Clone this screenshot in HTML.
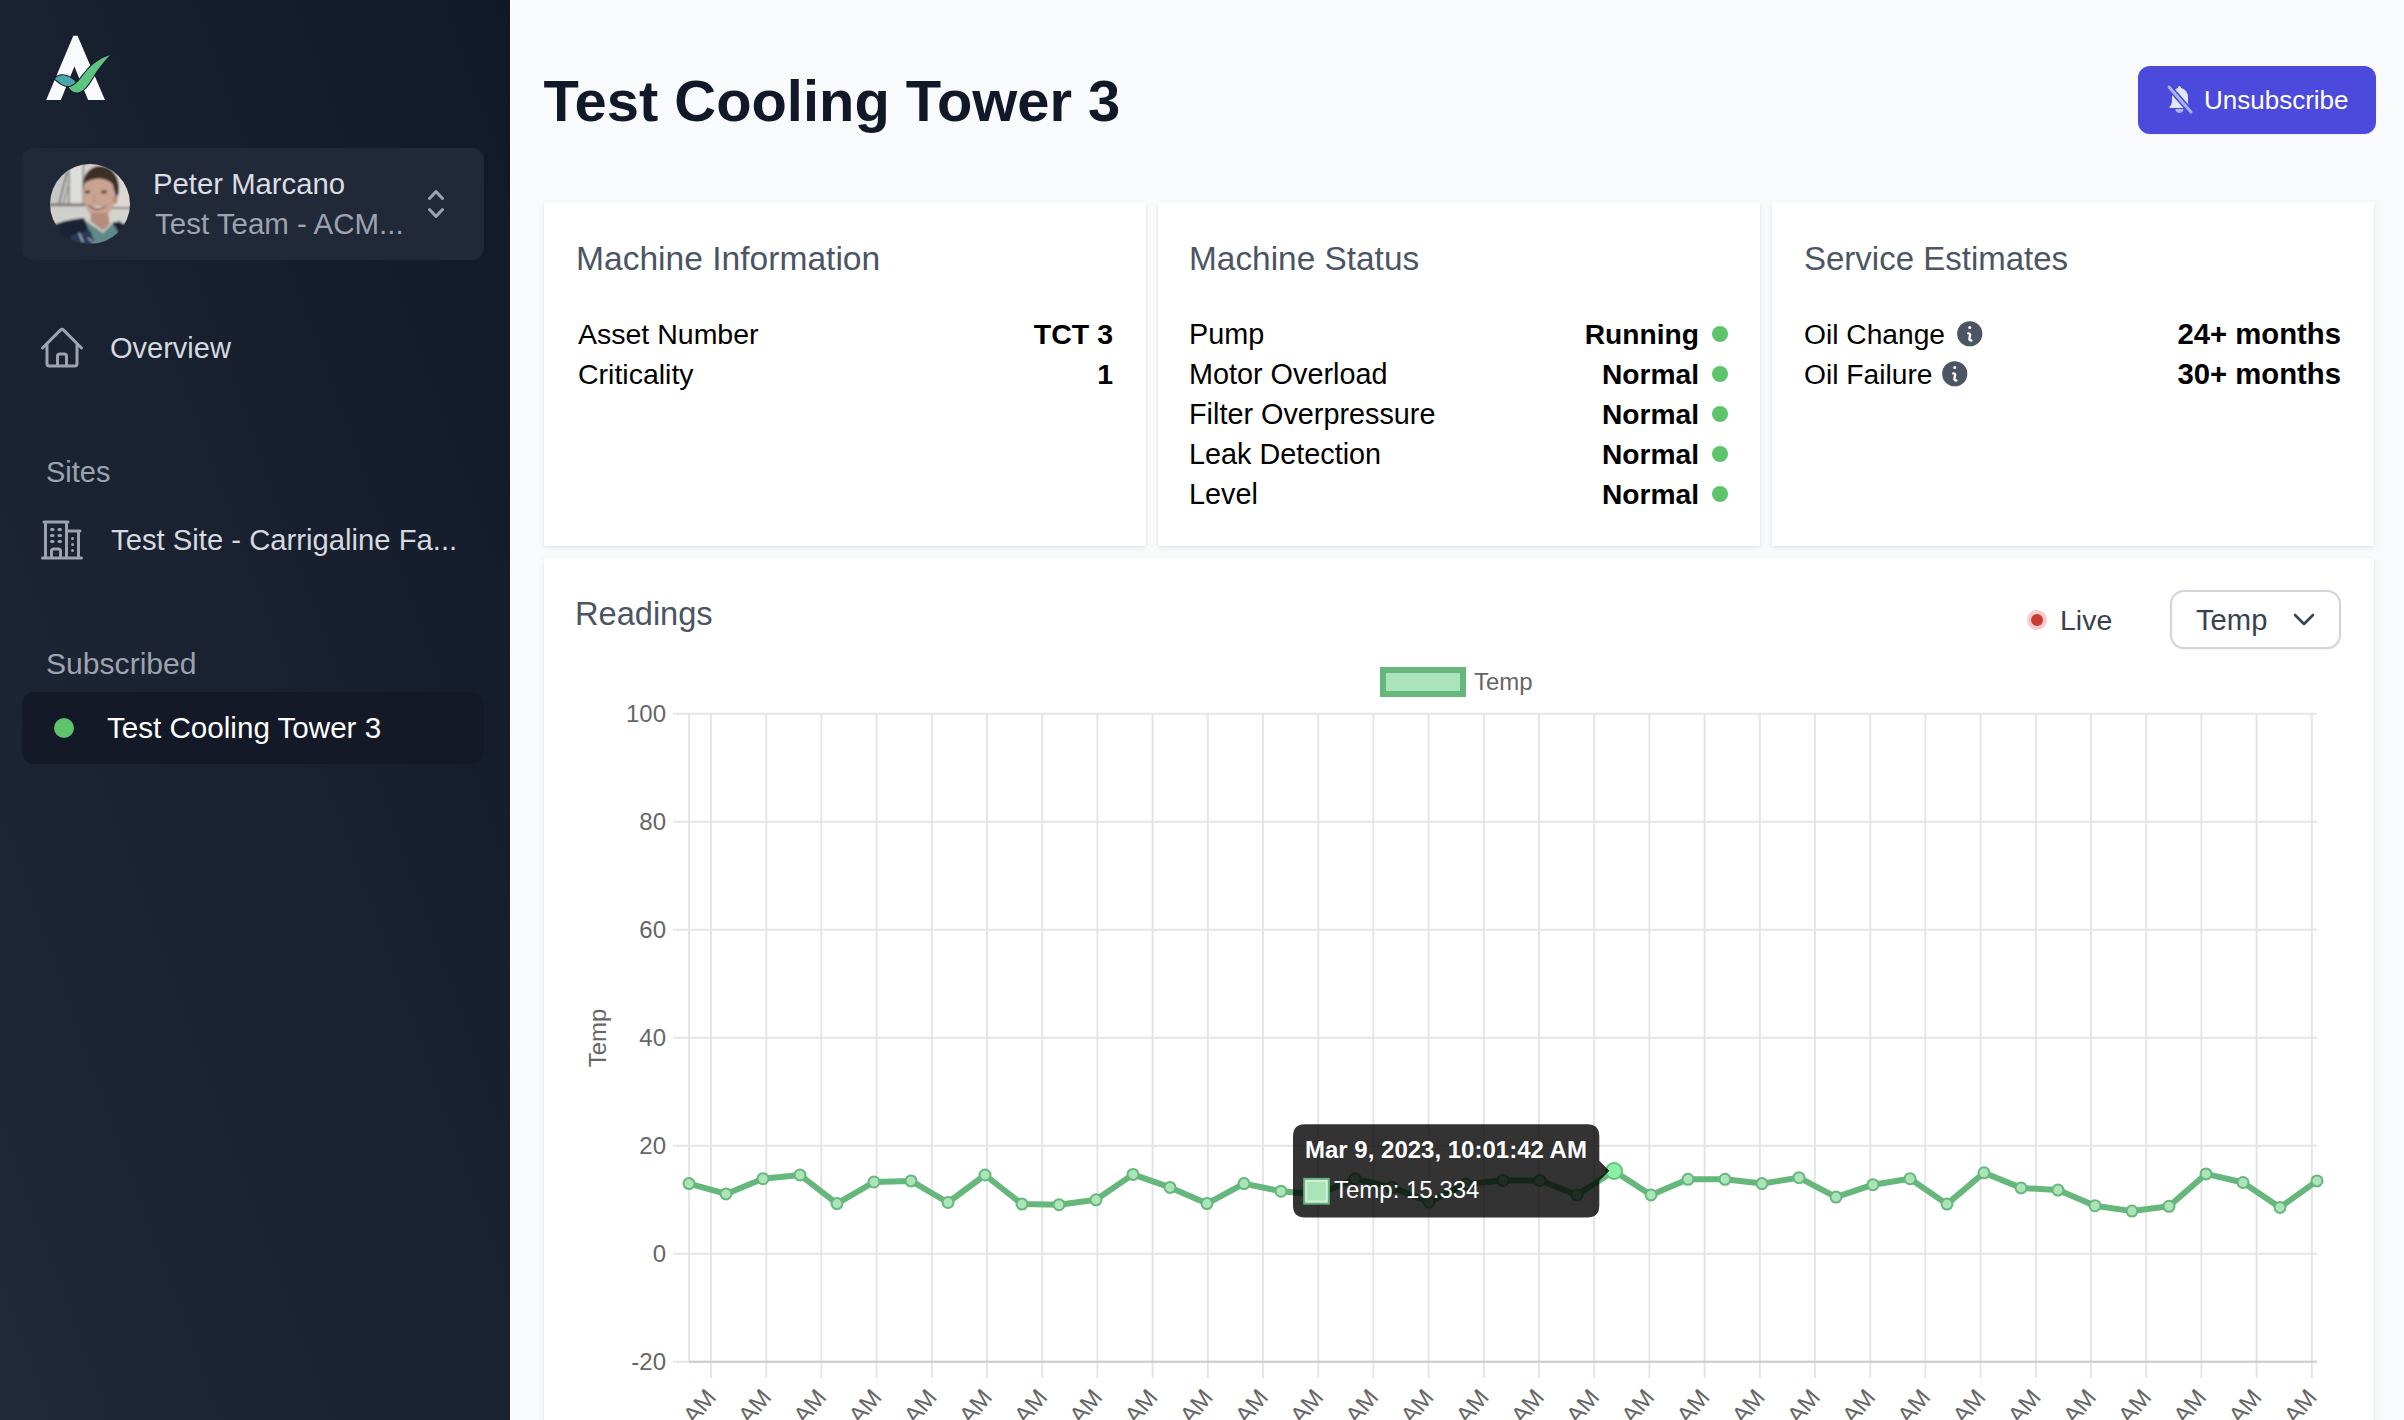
<!DOCTYPE html>
<html><head><meta charset="utf-8">
<style>
html,body{margin:0;padding:0;}
body{width:2404px;height:1420px;overflow:hidden;position:relative;background:#f9fafb;font-family:"Liberation Sans",sans-serif;}
.t{position:absolute;line-height:1;white-space:nowrap;}
@media (max-width:1300px){html{zoom:0.5;}}
.abs{position:absolute;}
.card{position:absolute;background:#fff;box-shadow:0 2px 6px rgba(0,0,0,0.07),0 1px 2px rgba(0,0,0,0.05);}
</style></head><body>
<div class="abs" style="left:0;top:0;width:510px;height:1420px;background:linear-gradient(to bottom left,#111827 0%,#1a2130 50%,#1f2937 100%);"></div>
<div class="abs" style="left:510px;top:0;width:1px;height:1420px;background:#ffffff;"></div>
<svg class="abs" style="left:30px;top:20px" width="100" height="100" viewBox="0 0 1420 1420">
<path fill="#f9fafb" d="M615,225 L675,225 L1065,1135 L825,1135 L630,660 L438,1135 L230,1135 Z"/>
<path fill="#48a5aa" stroke="#171c2a" stroke-width="30" paint-order="stroke" d="M352,838 C410,758 545,765 662,893 C600,952 510,952 440,905 C400,878 378,852 352,838 Z"/>
<path fill="#5cc57f" stroke="#171c2a" stroke-width="30" paint-order="stroke" d="M552,955 C625,945 690,875 770,765 C870,630 990,545 1138,497 C1070,565 1000,650 925,760 C850,880 790,1000 690,1025 C620,1040 574,1000 552,955 Z"/>
</svg>
<div class="abs" style="left:22px;top:148px;width:462px;height:112px;border-radius:12px;background:#212837;"></div>
<svg class="abs" style="left:50px;top:164px" width="80" height="80" viewBox="0 0 80 80">
<defs><clipPath id="av"><circle cx="40" cy="40" r="40"/></clipPath><filter id="avb" x="-5%" y="-5%" width="110%" height="110%"><feGaussianBlur stdDeviation="1"/></filter></defs>
<g clip-path="url(#av)"><g filter="url(#avb)">
<rect x="-2" y="-2" width="84" height="84" fill="#d5d3ce"/>
<rect x="-2" y="-2" width="34" height="42" fill="#c6c7c5"/>
<path d="M9,40 L17,8" stroke="#55575a" stroke-width="1.3" fill="none"/>
<path d="M13,40 L21,12" stroke="#6b6d6e" stroke-width="1" fill="none"/>
<rect x="18" y="-2" width="1.8" height="42" fill="#8f8d88"/>
<rect x="20" y="-2" width="12" height="42" fill="#dcdcd9"/>
<rect x="32" y="-2" width="2.5" height="42" fill="#a9a6a0"/>
<rect x="-2" y="39.5" width="42" height="3" fill="#7d7770"/>
<rect x="-2" y="42.5" width="42" height="40" fill="#d0d0cd"/>
<rect x="62" y="-2" width="20" height="45" fill="#ddd8d2"/>
<rect x="55" y="43" width="27" height="2" fill="#8b857d"/>
<path d="M33,24 C32,9 42,1 52,2 C62,3 70,12 69,28 L66,36 C65,23 60,17 52,15 C44,14 38,17 34,27 Z" fill="#3c2d25"/>
<path d="M34,20 C40,14 56,12 63,21 C65,30 66,38 62,45 C58,51 52,54 47,53 C40,52 35,44 34,36 C33,30 33,25 34,20 Z" fill="#caa393"/>
<ellipse cx="65" cy="36" rx="2.5" ry="4" fill="#b98d7c"/>
<ellipse cx="37.5" cy="28" rx="3" ry="1.4" fill="#5a4038"/>
<ellipse cx="54" cy="28" rx="3.2" ry="1.4" fill="#5a4038"/>
<path d="M45,30 L43.5,38 L47,38.5" stroke="#b08878" stroke-width="0.8" fill="none"/>
<path d="M37.5,40.5 C44,48 51,47 57,41.5 C50,43.5 44,43.5 37.5,40.5 Z" fill="#6a4540"/>
<path d="M39.5,41.3 Q47,44 55,42 Q48,47 39.5,41.3 Z" fill="#f0eae6"/>
<path d="M41,49 L58,49 L60,60 L53,67 L40,57 Z" fill="#b58d7d"/>
<path d="M33,55 L46,64 L53,69 L61,61 L70,56 L76,82 L34,82 Z" fill="#5e8a89"/>
<path d="M-2,63 C10,58 20,55 34,54 C37,62 41,72 45,82 L-2,82 Z" fill="#1d2434"/>
<path d="M20,72 L40,66 L46,82 L24,82 Z" fill="#2b3a58"/>
<path d="M62,59 C66,57 72,58 78,62 L82,82 L70,82 C70,72 68,65 62,59 Z" fill="#1d2434"/>
<path d="M29,69 L33,78" stroke="#e5e7eb" stroke-width="1"/>
<path d="M38,74 L45,80" stroke="#e5e7eb" stroke-width="1"/>
</g></g></svg>
<div class="t" style="left:153.0px;top:168.9px;font-size:29.3px;color:#dadde3;font-weight:400;">Peter Marcano</div>
<div class="t" style="left:155.0px;top:209.0px;font-size:29.5px;color:#9ca3af;font-weight:400;">Test Team - ACM...</div>
<svg class="abs" style="left:416px;top:184px" width="40" height="40" viewBox="0 0 20 20" fill="#9ca3af">
<path fill-rule="evenodd" d="M10 3a.75.75 0 01.55.24l3.25 3.5a.75.75 0 11-1.1 1.02L10 4.852 7.3 7.76a.75.75 0 01-1.1-1.02l3.25-3.5A.75.75 0 0110 3zm-3.76 9.2a.75.75 0 011.06.04l2.7 2.908 2.7-2.908a.75.75 0 111.1 1.02l-3.25 3.5a.75.75 0 01-1.1 0l-3.25-3.5a.75.75 0 01.04-1.06z"/>
</svg>
<svg class="abs" style="left:38px;top:324px" width="48" height="48" viewBox="0 0 24 24" fill="none" stroke="#9ca3af" stroke-width="1.5" stroke-linecap="round" stroke-linejoin="round">
<path d="M2.25 12l8.954-8.955c.44-.439 1.152-.439 1.591 0L21.75 12M4.5 9.75v10.125c0 .621.504 1.125 1.125 1.125H9.75v-4.875c0-.621.504-1.125 1.125-1.125h2.25c.621 0 1.125.504 1.125 1.125V21h4.125c.621 0 1.125-.504 1.125-1.125V9.75M8.25 21h8.25"/>
</svg>
<div class="t" style="left:110.0px;top:333.5px;font-size:29px;color:#d6d9df;font-weight:400;">Overview</div>
<div class="t" style="left:46.0px;top:457.5px;font-size:29px;color:#9ca3af;font-weight:400;">Sites</div>
<svg class="abs" style="left:38px;top:516px" width="48" height="48" viewBox="0 0 24 24" fill="none" stroke="#9ca3af" stroke-width="1.5" stroke-linecap="round" stroke-linejoin="round">
<path d="M2.25 21h19.5m-18-18v18m10.5-18v18m6-13.5V21M6.75 6.75h.75m-.75 3h.75m-.75 3h.75m3-6h.75m-.75 3h.75m-.75 3h.75M6.75 21v-3.375c0-.621.504-1.125 1.125-1.125h2.25c.621 0 1.125.504 1.125 1.125V21M3 3h12m-.75 4.5H21m-3.75 3.75h.008v.008h-.008v-.008zm0 3h.008v.008h-.008v-.008zm0 3h.008v.008h-.008v-.008z"/>
</svg>
<div class="t" style="left:111.0px;top:525.5px;font-size:29.25px;color:#d6d9df;font-weight:400;">Test Site - Carrigaline Fa...</div>
<div class="t" style="left:46.0px;top:648.5px;font-size:30.1px;color:#9ca3af;font-weight:400;">Subscribed</div>
<div class="abs" style="left:22px;top:692px;width:462px;height:72px;border-radius:12px;background:#131927;"></div>
<div class="abs" style="left:54px;top:718px;width:20px;height:20px;border-radius:50%;background:#5ec46c;"></div>
<div class="t" style="left:107.0px;top:713.1px;font-size:29.6px;color:#ffffff;font-weight:400;">Test Cooling Tower 3</div>
<div class="t" style="left:543.5px;top:73.0px;font-size:57.9px;color:#111827;font-weight:700;">Test Cooling Tower 3</div>
<div class="abs" style="left:2138px;top:66px;width:238px;height:68px;border-radius:12px;background:#4c4adc;box-shadow:0 1px 2px rgba(0,0,0,0.05);"></div>
<svg class="abs" style="left:2160px;top:80px" width="40" height="40" viewBox="0 0 40 40">
<path d="M18,8 C18,6.5 19,6 19.5,6 C20,6 21,6.5 21,8 C25,9 28,12.5 28,17 L28,22 C28,25 29.5,27 30.5,28 L10,28 C9.5,28 9,27.5 9.5,27 C10.5,26 12,24 12,21 L12,17 C12,12.5 14.5,9 18,8 Z" fill="#e0e7ff"/>
<path d="M15.5,29 C15.5,31.5 17.5,33 19.5,33 C21.5,33 23.5,31.5 23.5,29 Z" fill="#a5b4fc"/>
<path d="M9,7 L31,32" stroke="#4c4adc" stroke-width="6"/>
<path d="M9,7 L31,32" stroke="#a5b4fc" stroke-width="3" stroke-linecap="round"/>
</svg>
<div class="t" style="left:2204.0px;top:87.2px;font-size:26px;color:#ffffff;font-weight:400;">Unsubscribe</div>
<div class="card" style="left:544px;top:202px;width:602px;height:344px;"></div>
<div class="card" style="left:1158px;top:202px;width:602px;height:344px;"></div>
<div class="card" style="left:1772px;top:202px;width:602px;height:344px;"></div>
<div class="card" style="left:544px;top:558px;width:1830px;height:900px;"></div>
<div class="t" style="left:576.0px;top:241.9px;font-size:33.6px;color:#4b5563;font-weight:400;">Machine Information</div>
<div class="t" style="left:578.0px;top:319.8px;font-size:28.5px;color:#000;font-weight:400;">Asset Number</div>
<div class="t" style="left:578.0px;top:359.6px;font-size:28.5px;color:#000;font-weight:400;">Criticality</div>
<div class="t" style="right:1291.0px;top:319.8px;font-size:28.5px;color:#000;font-weight:700;">TCT 3</div>
<div class="t" style="right:1291.0px;top:359.6px;font-size:28.5px;color:#000;font-weight:700;">1</div>
<div class="t" style="left:1189.0px;top:242.0px;font-size:33.4px;color:#4b5563;font-weight:400;">Machine Status</div>
<div class="t" style="left:1189.0px;top:319.5px;font-size:28.8px;color:#000;font-weight:400;">Pump</div>
<div class="t" style="right:705.0px;top:320.0px;font-size:28.2px;color:#000;font-weight:700;">Running</div>
<div class="abs" style="left:1712px;top:325.6px;width:16px;height:16px;border-radius:50%;background:#5ec46c;"></div>
<div class="t" style="left:1189.0px;top:359.5px;font-size:28.8px;color:#000;font-weight:400;">Motor Overload</div>
<div class="t" style="right:705.0px;top:360.0px;font-size:28.2px;color:#000;font-weight:700;">Normal</div>
<div class="abs" style="left:1712px;top:365.6px;width:16px;height:16px;border-radius:50%;background:#5ec46c;"></div>
<div class="t" style="left:1189.0px;top:399.5px;font-size:28.8px;color:#000;font-weight:400;">Filter Overpressure</div>
<div class="t" style="right:705.0px;top:400.0px;font-size:28.2px;color:#000;font-weight:700;">Normal</div>
<div class="abs" style="left:1712px;top:405.6px;width:16px;height:16px;border-radius:50%;background:#5ec46c;"></div>
<div class="t" style="left:1189.0px;top:439.5px;font-size:28.8px;color:#000;font-weight:400;">Leak Detection</div>
<div class="t" style="right:705.0px;top:440.0px;font-size:28.2px;color:#000;font-weight:700;">Normal</div>
<div class="abs" style="left:1712px;top:445.6px;width:16px;height:16px;border-radius:50%;background:#5ec46c;"></div>
<div class="t" style="left:1189.0px;top:479.5px;font-size:28.8px;color:#000;font-weight:400;">Level</div>
<div class="t" style="right:705.0px;top:480.0px;font-size:28.2px;color:#000;font-weight:700;">Normal</div>
<div class="abs" style="left:1712px;top:485.6px;width:16px;height:16px;border-radius:50%;background:#5ec46c;"></div>
<div class="t" style="left:1804.0px;top:242.4px;font-size:33px;color:#4b5563;font-weight:400;">Service Estimates</div>
<div class="t" style="left:1804.0px;top:320.0px;font-size:28.2px;color:#000;font-weight:400;">Oil Change</div>
<div class="t" style="right:63.0px;top:319.1px;font-size:29.3px;color:#000;font-weight:700;">24+ months</div>
<svg class="abs" style="left:1954.0px;top:318.1px" width="31.5" height="31.5" viewBox="0 0 20 20"><path fill="#4b5563" fill-rule="evenodd" d="M18 10a8 8 0 11-16 0 8 8 0 0116 0zm-7-4a1 1 0 11-2 0 1 1 0 012 0zM9 9a.75.75 0 000 1.5h.253a.25.25 0 01.244.304l-.459 2.066A1.75 1.75 0 0010.747 15H11a.75.75 0 000-1.5h-.253a.25.25 0 01-.244-.304l.459-2.066A1.75 1.75 0 009.253 9H9z"/></svg>
<div class="t" style="left:1804.0px;top:360.0px;font-size:28.2px;color:#000;font-weight:400;">Oil Failure</div>
<div class="t" style="right:63.0px;top:359.1px;font-size:29.3px;color:#000;font-weight:700;">30+ months</div>
<svg class="abs" style="left:1939.0px;top:358.1px" width="31.5" height="31.5" viewBox="0 0 20 20"><path fill="#4b5563" fill-rule="evenodd" d="M18 10a8 8 0 11-16 0 8 8 0 0116 0zm-7-4a1 1 0 11-2 0 1 1 0 012 0zM9 9a.75.75 0 000 1.5h.253a.25.25 0 01.244.304l-.459 2.066A1.75 1.75 0 0010.747 15H11a.75.75 0 000-1.5h-.253a.25.25 0 01-.244-.304l.459-2.066A1.75 1.75 0 009.253 9H9z"/></svg>
<div class="t" style="left:575.0px;top:598.3px;font-size:32.6px;color:#4b5563;font-weight:400;">Readings</div>
<div class="abs" style="left:2027px;top:610px;width:20px;height:20px;border-radius:50%;background:#f6cccc;"></div>
<div class="abs" style="left:2031.1px;top:614.1px;width:11.8px;height:11.8px;border-radius:50%;background:#c93a32;"></div>
<div class="t" style="left:2060.0px;top:606.0px;font-size:28.5px;color:#374151;font-weight:400;">Live</div>
<div class="abs" style="left:2170px;top:590px;width:171px;height:59px;box-sizing:border-box;border:2px solid #d1d5db;border-radius:14px;background:#fff;box-shadow:0 1px 2px rgba(0,0,0,0.05);"></div>
<div class="t" style="left:2196.0px;top:605.9px;font-size:29.2px;color:#374151;font-weight:400;">Temp</div>
<svg class="abs" style="left:2292px;top:608px" width="24" height="24" viewBox="0 0 24 24" fill="none" stroke="#374151" stroke-width="2.6" stroke-linecap="round" stroke-linejoin="round"><path d="M3,7 L12,16 L21,7"/></svg>
<svg class="abs" style="left:0;top:0" width="2404" height="1420" viewBox="0 0 2404 1420" font-family="Liberation Sans, sans-serif">
<line x1="673" y1="713.8" x2="2317" y2="713.8" stroke="#e5e5e5" stroke-width="2"/>
<text x="666" y="721.6" font-size="24" fill="#666" text-anchor="end">100</text>
<line x1="673" y1="821.8" x2="2317" y2="821.8" stroke="#e5e5e5" stroke-width="2"/>
<text x="666" y="829.6" font-size="24" fill="#666" text-anchor="end">80</text>
<line x1="673" y1="929.8" x2="2317" y2="929.8" stroke="#e5e5e5" stroke-width="2"/>
<text x="666" y="937.6" font-size="24" fill="#666" text-anchor="end">60</text>
<line x1="673" y1="1037.8" x2="2317" y2="1037.8" stroke="#e5e5e5" stroke-width="2"/>
<text x="666" y="1045.6" font-size="24" fill="#666" text-anchor="end">40</text>
<line x1="673" y1="1145.8" x2="2317" y2="1145.8" stroke="#e5e5e5" stroke-width="2"/>
<text x="666" y="1153.6" font-size="24" fill="#666" text-anchor="end">20</text>
<line x1="673" y1="1253.8" x2="2317" y2="1253.8" stroke="#e5e5e5" stroke-width="2"/>
<text x="666" y="1261.6" font-size="24" fill="#666" text-anchor="end">0</text>
<line x1="673" y1="1361.8" x2="2317" y2="1361.8" stroke="#e5e5e5" stroke-width="2"/>
<text x="666" y="1369.6" font-size="24" fill="#666" text-anchor="end">-20</text>
<line x1="689" y1="714" x2="689" y2="1362" stroke="#e5e5e5" stroke-width="2"/>
<line x1="711.0" y1="714" x2="711.0" y2="1378" stroke="#e5e5e5" stroke-width="2"/>
<text x="717.3" y="1398" font-size="24" fill="#666" text-anchor="end" transform="rotate(-50 717.3 1398)">10:00:00 AM</text>
<line x1="766.2" y1="714" x2="766.2" y2="1378" stroke="#e5e5e5" stroke-width="2"/>
<text x="772.5" y="1398" font-size="24" fill="#666" text-anchor="end" transform="rotate(-50 772.5 1398)">10:00:00 AM</text>
<line x1="821.4" y1="714" x2="821.4" y2="1378" stroke="#e5e5e5" stroke-width="2"/>
<text x="827.7" y="1398" font-size="24" fill="#666" text-anchor="end" transform="rotate(-50 827.7 1398)">10:00:00 AM</text>
<line x1="876.6" y1="714" x2="876.6" y2="1378" stroke="#e5e5e5" stroke-width="2"/>
<text x="882.9" y="1398" font-size="24" fill="#666" text-anchor="end" transform="rotate(-50 882.9 1398)">10:00:00 AM</text>
<line x1="931.8" y1="714" x2="931.8" y2="1378" stroke="#e5e5e5" stroke-width="2"/>
<text x="938.1" y="1398" font-size="24" fill="#666" text-anchor="end" transform="rotate(-50 938.1 1398)">10:00:00 AM</text>
<line x1="987.0" y1="714" x2="987.0" y2="1378" stroke="#e5e5e5" stroke-width="2"/>
<text x="993.3" y="1398" font-size="24" fill="#666" text-anchor="end" transform="rotate(-50 993.3 1398)">10:00:00 AM</text>
<line x1="1042.2" y1="714" x2="1042.2" y2="1378" stroke="#e5e5e5" stroke-width="2"/>
<text x="1048.5" y="1398" font-size="24" fill="#666" text-anchor="end" transform="rotate(-50 1048.5 1398)">10:00:00 AM</text>
<line x1="1097.4" y1="714" x2="1097.4" y2="1378" stroke="#e5e5e5" stroke-width="2"/>
<text x="1103.7" y="1398" font-size="24" fill="#666" text-anchor="end" transform="rotate(-50 1103.7 1398)">10:00:00 AM</text>
<line x1="1152.6" y1="714" x2="1152.6" y2="1378" stroke="#e5e5e5" stroke-width="2"/>
<text x="1158.9" y="1398" font-size="24" fill="#666" text-anchor="end" transform="rotate(-50 1158.9 1398)">10:00:00 AM</text>
<line x1="1207.8" y1="714" x2="1207.8" y2="1378" stroke="#e5e5e5" stroke-width="2"/>
<text x="1214.1" y="1398" font-size="24" fill="#666" text-anchor="end" transform="rotate(-50 1214.1 1398)">10:00:00 AM</text>
<line x1="1263.0" y1="714" x2="1263.0" y2="1378" stroke="#e5e5e5" stroke-width="2"/>
<text x="1269.3" y="1398" font-size="24" fill="#666" text-anchor="end" transform="rotate(-50 1269.3 1398)">10:00:00 AM</text>
<line x1="1318.2" y1="714" x2="1318.2" y2="1378" stroke="#e5e5e5" stroke-width="2"/>
<text x="1324.5" y="1398" font-size="24" fill="#666" text-anchor="end" transform="rotate(-50 1324.5 1398)">10:00:00 AM</text>
<line x1="1373.4" y1="714" x2="1373.4" y2="1378" stroke="#e5e5e5" stroke-width="2"/>
<text x="1379.7" y="1398" font-size="24" fill="#666" text-anchor="end" transform="rotate(-50 1379.7 1398)">10:00:00 AM</text>
<line x1="1428.6" y1="714" x2="1428.6" y2="1378" stroke="#e5e5e5" stroke-width="2"/>
<text x="1434.9" y="1398" font-size="24" fill="#666" text-anchor="end" transform="rotate(-50 1434.9 1398)">10:00:00 AM</text>
<line x1="1483.8" y1="714" x2="1483.8" y2="1378" stroke="#e5e5e5" stroke-width="2"/>
<text x="1490.1" y="1398" font-size="24" fill="#666" text-anchor="end" transform="rotate(-50 1490.1 1398)">10:00:00 AM</text>
<line x1="1539.0" y1="714" x2="1539.0" y2="1378" stroke="#e5e5e5" stroke-width="2"/>
<text x="1545.3" y="1398" font-size="24" fill="#666" text-anchor="end" transform="rotate(-50 1545.3 1398)">10:00:00 AM</text>
<line x1="1594.2" y1="714" x2="1594.2" y2="1378" stroke="#e5e5e5" stroke-width="2"/>
<text x="1600.5" y="1398" font-size="24" fill="#666" text-anchor="end" transform="rotate(-50 1600.5 1398)">10:00:00 AM</text>
<line x1="1649.4" y1="714" x2="1649.4" y2="1378" stroke="#e5e5e5" stroke-width="2"/>
<text x="1655.7" y="1398" font-size="24" fill="#666" text-anchor="end" transform="rotate(-50 1655.7 1398)">10:00:00 AM</text>
<line x1="1704.6" y1="714" x2="1704.6" y2="1378" stroke="#e5e5e5" stroke-width="2"/>
<text x="1710.9" y="1398" font-size="24" fill="#666" text-anchor="end" transform="rotate(-50 1710.9 1398)">10:00:00 AM</text>
<line x1="1759.8" y1="714" x2="1759.8" y2="1378" stroke="#e5e5e5" stroke-width="2"/>
<text x="1766.1" y="1398" font-size="24" fill="#666" text-anchor="end" transform="rotate(-50 1766.1 1398)">10:00:00 AM</text>
<line x1="1815.0" y1="714" x2="1815.0" y2="1378" stroke="#e5e5e5" stroke-width="2"/>
<text x="1821.3" y="1398" font-size="24" fill="#666" text-anchor="end" transform="rotate(-50 1821.3 1398)">10:00:00 AM</text>
<line x1="1870.2" y1="714" x2="1870.2" y2="1378" stroke="#e5e5e5" stroke-width="2"/>
<text x="1876.5" y="1398" font-size="24" fill="#666" text-anchor="end" transform="rotate(-50 1876.5 1398)">10:00:00 AM</text>
<line x1="1925.4" y1="714" x2="1925.4" y2="1378" stroke="#e5e5e5" stroke-width="2"/>
<text x="1931.7" y="1398" font-size="24" fill="#666" text-anchor="end" transform="rotate(-50 1931.7 1398)">10:00:00 AM</text>
<line x1="1980.6" y1="714" x2="1980.6" y2="1378" stroke="#e5e5e5" stroke-width="2"/>
<text x="1986.9" y="1398" font-size="24" fill="#666" text-anchor="end" transform="rotate(-50 1986.9 1398)">10:00:00 AM</text>
<line x1="2035.8" y1="714" x2="2035.8" y2="1378" stroke="#e5e5e5" stroke-width="2"/>
<text x="2042.1" y="1398" font-size="24" fill="#666" text-anchor="end" transform="rotate(-50 2042.1 1398)">10:00:00 AM</text>
<line x1="2091.0" y1="714" x2="2091.0" y2="1378" stroke="#e5e5e5" stroke-width="2"/>
<text x="2097.3" y="1398" font-size="24" fill="#666" text-anchor="end" transform="rotate(-50 2097.3 1398)">10:00:00 AM</text>
<line x1="2146.2" y1="714" x2="2146.2" y2="1378" stroke="#e5e5e5" stroke-width="2"/>
<text x="2152.5" y="1398" font-size="24" fill="#666" text-anchor="end" transform="rotate(-50 2152.5 1398)">10:00:00 AM</text>
<line x1="2201.4" y1="714" x2="2201.4" y2="1378" stroke="#e5e5e5" stroke-width="2"/>
<text x="2207.7" y="1398" font-size="24" fill="#666" text-anchor="end" transform="rotate(-50 2207.7 1398)">10:00:00 AM</text>
<line x1="2256.6" y1="714" x2="2256.6" y2="1378" stroke="#e5e5e5" stroke-width="2"/>
<text x="2262.9" y="1398" font-size="24" fill="#666" text-anchor="end" transform="rotate(-50 2262.9 1398)">10:00:00 AM</text>
<line x1="2311.8" y1="714" x2="2311.8" y2="1378" stroke="#e5e5e5" stroke-width="2"/>
<text x="2318.1" y="1398" font-size="24" fill="#666" text-anchor="end" transform="rotate(-50 2318.1 1398)">10:00:00 AM</text>
<line x1="689" y1="1361.8" x2="2317" y2="1361.8" stroke="#cdcdcd" stroke-width="2"/>
<text x="0" y="0" font-size="24" fill="#666" text-anchor="middle" transform="translate(606 1038) rotate(-90)">Temp</text>
<rect x="1383" y="670" width="80" height="24" fill="#abe4b9" stroke="#66b77c" stroke-width="6"/>
<text x="1474" y="690.3" font-size="24" fill="#666">Temp</text>
<polyline points="689.0,1183.6 726.0,1193.9 763.0,1178.7 800.0,1175.0 837.0,1203.6 874.0,1182.0 911.0,1180.9 948.0,1202.5 985.0,1175.0 1022.0,1204.1 1059.0,1204.7 1096.0,1199.8 1133.0,1174.4 1170.0,1187.4 1207.0,1203.6 1244.0,1183.6 1281.0,1191.2 1318.0,1194.4 1355.0,1178.7 1392.0,1187.4 1429.0,1202.0 1466.0,1184.1 1503.0,1180.4 1540.0,1180.4 1577.0,1194.9 1614.0,1171.0 1651.0,1194.9 1688.0,1179.3 1725.0,1179.3 1762.0,1183.6 1799.0,1177.7 1836.0,1197.1 1873.0,1184.7 1910.0,1178.7 1947.0,1204.1 1984.0,1172.8 2021.0,1187.9 2058.0,1190.1 2095.0,1205.7 2132.0,1211.1 2169.0,1206.3 2206.0,1173.9 2243.0,1182.5 2280.0,1207.4 2317.0,1180.9" fill="none" stroke="#66b77c" stroke-width="6" stroke-linejoin="round"/>
<circle cx="689.0" cy="1183.6" r="5.5" fill="#abe4b9" stroke="#66b77c" stroke-width="2"/>
<circle cx="726.0" cy="1193.9" r="5.5" fill="#abe4b9" stroke="#66b77c" stroke-width="2"/>
<circle cx="763.0" cy="1178.7" r="5.5" fill="#abe4b9" stroke="#66b77c" stroke-width="2"/>
<circle cx="800.0" cy="1175.0" r="5.5" fill="#abe4b9" stroke="#66b77c" stroke-width="2"/>
<circle cx="837.0" cy="1203.6" r="5.5" fill="#abe4b9" stroke="#66b77c" stroke-width="2"/>
<circle cx="874.0" cy="1182.0" r="5.5" fill="#abe4b9" stroke="#66b77c" stroke-width="2"/>
<circle cx="911.0" cy="1180.9" r="5.5" fill="#abe4b9" stroke="#66b77c" stroke-width="2"/>
<circle cx="948.0" cy="1202.5" r="5.5" fill="#abe4b9" stroke="#66b77c" stroke-width="2"/>
<circle cx="985.0" cy="1175.0" r="5.5" fill="#abe4b9" stroke="#66b77c" stroke-width="2"/>
<circle cx="1022.0" cy="1204.1" r="5.5" fill="#abe4b9" stroke="#66b77c" stroke-width="2"/>
<circle cx="1059.0" cy="1204.7" r="5.5" fill="#abe4b9" stroke="#66b77c" stroke-width="2"/>
<circle cx="1096.0" cy="1199.8" r="5.5" fill="#abe4b9" stroke="#66b77c" stroke-width="2"/>
<circle cx="1133.0" cy="1174.4" r="5.5" fill="#abe4b9" stroke="#66b77c" stroke-width="2"/>
<circle cx="1170.0" cy="1187.4" r="5.5" fill="#abe4b9" stroke="#66b77c" stroke-width="2"/>
<circle cx="1207.0" cy="1203.6" r="5.5" fill="#abe4b9" stroke="#66b77c" stroke-width="2"/>
<circle cx="1244.0" cy="1183.6" r="5.5" fill="#abe4b9" stroke="#66b77c" stroke-width="2"/>
<circle cx="1281.0" cy="1191.2" r="5.5" fill="#abe4b9" stroke="#66b77c" stroke-width="2"/>
<circle cx="1318.0" cy="1194.4" r="5.5" fill="#abe4b9" stroke="#66b77c" stroke-width="2"/>
<circle cx="1355.0" cy="1178.7" r="5.5" fill="#abe4b9" stroke="#66b77c" stroke-width="2"/>
<circle cx="1392.0" cy="1187.4" r="5.5" fill="#abe4b9" stroke="#66b77c" stroke-width="2"/>
<circle cx="1429.0" cy="1202.0" r="5.5" fill="#abe4b9" stroke="#66b77c" stroke-width="2"/>
<circle cx="1466.0" cy="1184.1" r="5.5" fill="#abe4b9" stroke="#66b77c" stroke-width="2"/>
<circle cx="1503.0" cy="1180.4" r="5.5" fill="#abe4b9" stroke="#66b77c" stroke-width="2"/>
<circle cx="1540.0" cy="1180.4" r="5.5" fill="#abe4b9" stroke="#66b77c" stroke-width="2"/>
<circle cx="1577.0" cy="1194.9" r="5.5" fill="#abe4b9" stroke="#66b77c" stroke-width="2"/>
<circle cx="1651.0" cy="1194.9" r="5.5" fill="#abe4b9" stroke="#66b77c" stroke-width="2"/>
<circle cx="1688.0" cy="1179.3" r="5.5" fill="#abe4b9" stroke="#66b77c" stroke-width="2"/>
<circle cx="1725.0" cy="1179.3" r="5.5" fill="#abe4b9" stroke="#66b77c" stroke-width="2"/>
<circle cx="1762.0" cy="1183.6" r="5.5" fill="#abe4b9" stroke="#66b77c" stroke-width="2"/>
<circle cx="1799.0" cy="1177.7" r="5.5" fill="#abe4b9" stroke="#66b77c" stroke-width="2"/>
<circle cx="1836.0" cy="1197.1" r="5.5" fill="#abe4b9" stroke="#66b77c" stroke-width="2"/>
<circle cx="1873.0" cy="1184.7" r="5.5" fill="#abe4b9" stroke="#66b77c" stroke-width="2"/>
<circle cx="1910.0" cy="1178.7" r="5.5" fill="#abe4b9" stroke="#66b77c" stroke-width="2"/>
<circle cx="1947.0" cy="1204.1" r="5.5" fill="#abe4b9" stroke="#66b77c" stroke-width="2"/>
<circle cx="1984.0" cy="1172.8" r="5.5" fill="#abe4b9" stroke="#66b77c" stroke-width="2"/>
<circle cx="2021.0" cy="1187.9" r="5.5" fill="#abe4b9" stroke="#66b77c" stroke-width="2"/>
<circle cx="2058.0" cy="1190.1" r="5.5" fill="#abe4b9" stroke="#66b77c" stroke-width="2"/>
<circle cx="2095.0" cy="1205.7" r="5.5" fill="#abe4b9" stroke="#66b77c" stroke-width="2"/>
<circle cx="2132.0" cy="1211.1" r="5.5" fill="#abe4b9" stroke="#66b77c" stroke-width="2"/>
<circle cx="2169.0" cy="1206.3" r="5.5" fill="#abe4b9" stroke="#66b77c" stroke-width="2"/>
<circle cx="2206.0" cy="1173.9" r="5.5" fill="#abe4b9" stroke="#66b77c" stroke-width="2"/>
<circle cx="2243.0" cy="1182.5" r="5.5" fill="#abe4b9" stroke="#66b77c" stroke-width="2"/>
<circle cx="2280.0" cy="1207.4" r="5.5" fill="#abe4b9" stroke="#66b77c" stroke-width="2"/>
<circle cx="2317.0" cy="1180.9" r="5.5" fill="#abe4b9" stroke="#66b77c" stroke-width="2"/>
<circle cx="1614.0" cy="1171.0" r="8" fill="#8ef0a8" stroke="#5fc776" stroke-width="2"/>
<path d="M1305,1124.3 L1587.3,1124.3 Q1599.3,1124.3 1599.3,1136.3 L1599.3,1160.7 L1609.3,1170.7 L1599.3,1180.7 L1599.3,1205.5 Q1599.3,1217.5 1587.3,1217.5 L1305,1217.5 Q1293,1217.5 1293,1205.5 L1293,1136.3 Q1293,1124.3 1305,1124.3 Z" fill="rgba(0,0,0,0.8)"/>
<text x="1305" y="1158.2" font-size="24" font-weight="700" fill="#fff">Mar 9, 2023, 10:01:42 AM</text>
<rect x="1303.2" y="1177.9" width="26.6" height="26.7" fill="#66b77c"/>
<rect x="1305.2" y="1179.9" width="22.6" height="22.7" fill="#d6efdc"/>
<rect x="1307.2" y="1181.9" width="18.6" height="18.7" fill="#abe4b9"/>
<text x="1334" y="1198.4" font-size="24" fill="#fff">Temp: 15.334</text>
</svg>
</body></html>
